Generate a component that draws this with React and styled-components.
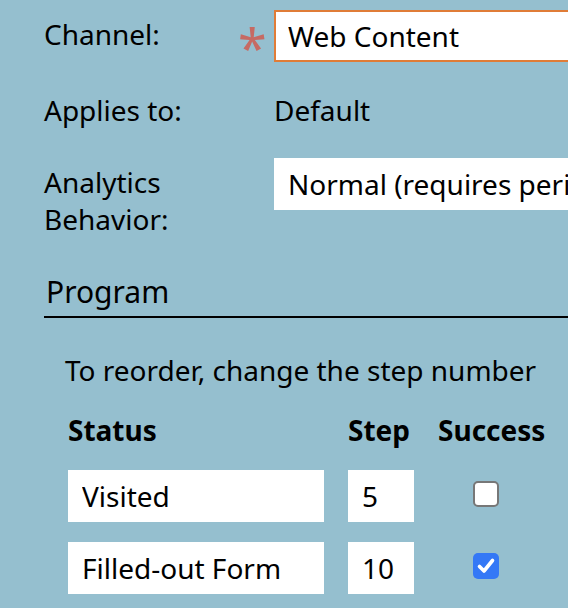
import React from 'react';
import styled, { createGlobalStyle } from 'styled-components';

const Global = createGlobalStyle`
  html, body {
    margin: 0;
    padding: 0;
    background: #95bfcf;
    overflow: hidden;
  }
  body {
    font-family: "Noto Sans", "Open Sans", sans-serif;
    color: #000;
  }
`;

const Page = styled.div`
  box-sizing: border-box;
  width: 760px;
  min-height: 608px;
  padding: 10px 0 0 44px;
  font-size: 28px;
  line-height: 36.4px;
`;

const Fields = styled.div`
  display: flex;
  flex-direction: column;
  gap: 30px;
`;

const FieldRow = styled.div`
  display: grid;
  grid-template-columns: 194px 36px 1fr;
  align-items: start;
`;

const Label = styled.div`
  padding-top: ${(p) => (p.$offset ? 6 : 0)}px;
`;

const Marker = styled.span`
  color: #c66a63;
  font-size: 52px;
  line-height: 20px;
  padding-top: 27px;
  filter: blur(0.3px);
`;

const Value = styled.div`
  white-space: nowrap;
`;

const TextBox = styled.input`
  box-sizing: border-box;
  display: block;
  width: 100%;
  height: 52px;
  margin: 0;
  border: ${(p) => (p.$required ? '2px solid #e07c37' : '1px solid #fff')};
  padding: 0 ${(p) => (p.$required ? 12 : 13)}px;
  border-radius: 0;
  background: #fff;
  color: #000;
  font: 28px "Noto Sans", "Open Sans", sans-serif;
  outline: none;
`;

const SelectBox = styled.div`
  box-sizing: border-box;
  height: 52px;
  border: 1px solid #fff;
  padding: 0 13px;
  background: #fff;
  display: flex;
  align-items: center;
  white-space: nowrap;
  overflow: hidden;
`;

const Section = styled.section`
  margin-top: 35px;
`;

const Heading = styled.h2`
  margin: 0;
  font-size: 30px;
  font-weight: 400;
  line-height: 39px;
  padding: 0 0 5px 2px;
  border-bottom: 2px solid #000;
`;

const Hint = styled.p`
  margin: 34px 0 0 21px;
`;

const StepTable = styled.div`
  margin: 23px 0 0 24px;
  display: grid;
  grid-template-columns: 256px 66px 96px;
  column-gap: 24px;
  row-gap: 20px;
`;

const HeadCell = styled.div`
  font-weight: 700;
  white-space: nowrap;
  margin-bottom: 2px;
`;

const CheckCell = styled.div`
  display: flex;
  justify-content: center;
  align-items: center;
  padding-bottom: 4px;
`;

const Check = styled.span`
  box-sizing: border-box;
  width: 26px;
  height: 26px;
  border-radius: 5px;
  border: ${(p) => (p.$on ? 'none' : '2px solid #777')};
  background: ${(p) => (p.$on ? '#3478f6' : '#fff')};
  display: flex;
  align-items: center;
  justify-content: center;
`;

const steps = [
  { status: 'Visited', step: '5', success: false },
  { status: 'Filled-out Form', step: '10', success: true },
];

export default function App() {
  return (
    <>
      <Global />
      <Page>
        <Fields>
          <FieldRow>
            <Label $offset>Channel:</Label>
            <Marker>*</Marker>
            <Value>
              <TextBox $required readOnly value="Web Content" />
            </Value>
          </FieldRow>
          <FieldRow>
            <Label>Applies to:</Label>
            <span />
            <Value>Default</Value>
          </FieldRow>
          <FieldRow>
            <Label $offset>Analytics Behavior:</Label>
            <span />
            <Value>
              <SelectBox role="combobox">Normal (requires periodic updates)</SelectBox>
            </Value>
          </FieldRow>
        </Fields>
        <Section>
          <Heading>Program</Heading>
          <Hint>To reorder, change the step number</Hint>
          <StepTable>
            <HeadCell>Status</HeadCell>
            <HeadCell>Step</HeadCell>
            <HeadCell>Success</HeadCell>
            {steps.map((s) => (
              <React.Fragment key={s.status}>
                <TextBox readOnly value={s.status} />
                <TextBox readOnly value={s.step} />
                <CheckCell>
                  <Check $on={s.success} role="checkbox" aria-checked={s.success}>
                    {s.success && (
                      <svg width="22" height="22" viewBox="0 0 22 22">
                        <path
                          d="M4.5 11.5 L9 16 L17.5 5.5"
                          fill="none"
                          stroke="#fff"
                          strokeWidth="3.6"
                          strokeLinecap="round"
                          strokeLinejoin="round"
                        />
                      </svg>
                    )}
                  </Check>
                </CheckCell>
              </React.Fragment>
            ))}
          </StepTable>
        </Section>
      </Page>
    </>
  );
}
